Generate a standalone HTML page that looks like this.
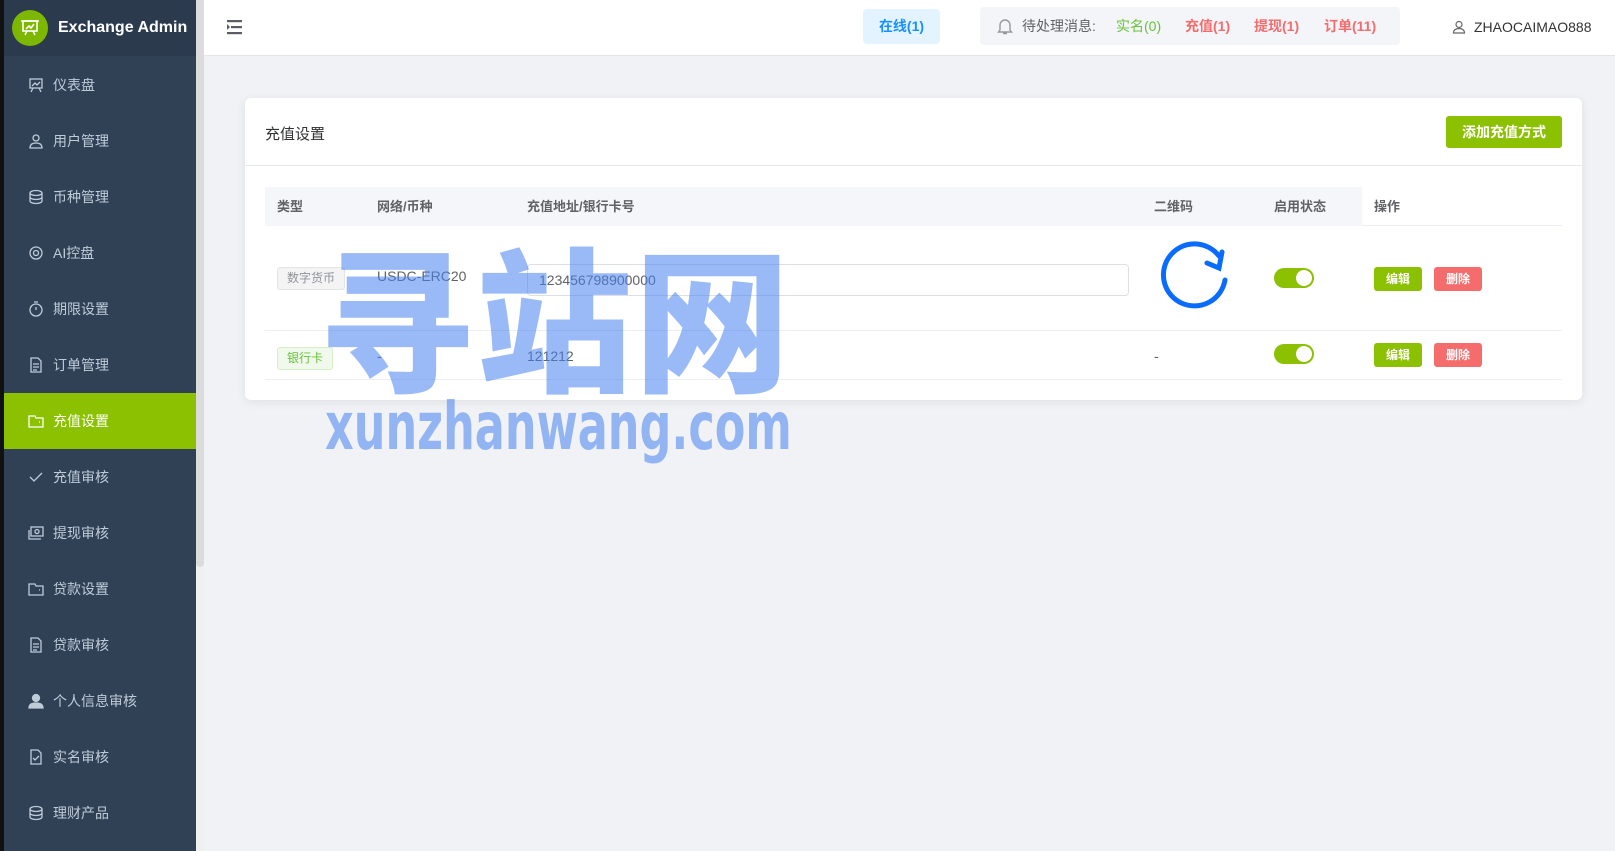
<!DOCTYPE html>
<html><head><meta charset="utf-8"><style>
*{box-sizing:border-box;margin:0;padding:0}
body{width:1615px;height:851px;overflow:hidden;background:#f0f2f5;font-family:"Liberation Sans","Noto Sans CJK SC",sans-serif;position:relative;font-size:14px;color:#303133}
.strip{position:absolute;left:0;top:0;width:4px;height:851px;background:#111}
.side{position:absolute;left:4px;top:0;width:192px;height:851px;background:#304156}
.logo{height:56px;background:#2b3a4d;display:flex;align-items:center;padding-left:8px}
.lc{width:36px;height:36px;border-radius:50%;background:#7db700;display:flex;align-items:center;justify-content:center}
.lt{color:#fff;font-weight:bold;font-size:16px;margin-left:10px}
.item{position:absolute;left:0;width:192px;height:56px;display:flex;align-items:center;padding-left:24px;color:#bfcbd9;font-size:14px}
.item svg{width:16px;height:16px;margin-right:9px;stroke:#bfcbd9;fill:none;stroke-width:1.3}
.item.act{background:#8bc100;color:#fff}
.item.act svg{stroke:#fff}
.scroll{position:absolute;left:196px;top:0;width:8px;height:567px;background:#dcdcdc;border-radius:0 0 4px 4px}
.scbg{position:absolute;left:196px;top:0;width:8px;height:851px;background:#f0f0f0}
.head{position:absolute;left:204px;top:0;right:0;height:56px;background:#fff;border-bottom:1px solid #e6e6e6}
.card{position:absolute;left:245px;top:98px;width:1337px;height:302px;background:#fff;border-radius:6px;box-shadow:0 2px 10px rgba(0,0,0,.08)}
.abs{position:absolute}
.th{position:absolute;top:9px;font-weight:bold;color:#606266;font-size:13px}
.btn{position:absolute;color:#fff;font-size:12px;font-weight:bold;border-radius:3px;text-align:center;width:48px;height:24px;line-height:24px}
.sw{position:absolute;width:40px;height:20px;border-radius:10px;background:#8bc100}
.sw::after{content:"";position:absolute;right:2px;top:2px;width:16px;height:16px;border-radius:50%;background:#fff}
</style></head><body>
<div class="strip"></div>
<div class="scbg"></div><div class="scroll"></div>
<div class="side">
<div class="logo"><div class="lc"><svg width="20" height="20" viewBox="0 0 20 20" fill="none" stroke="#fff" stroke-width="1.6"><rect x="3" y="3" width="14" height="10"/><path d="M6 11l3-3 2 2 3-4M7 13l-2 4M13 13l2 4M1 3h18"/></svg></div><div class="lt">Exchange Admin</div></div>
<div class="item" style="top:57px"><svg viewBox="0 0 16 16"><rect x="2" y="2" width="12" height="9"/><path d="M4 9l3-3 2 2 3-3M5 11l-2 4M11 11l2 4"/></svg>仪表盘</div>
<div class="item" style="top:113px"><svg viewBox="0 0 16 16"><circle cx="8" cy="5" r="3"/><path d="M2 15c0-4 3-5 6-5s6 1 6 5z"/></svg>用户管理</div>
<div class="item" style="top:169px"><svg viewBox="0 0 16 16"><ellipse cx="8" cy="4" rx="6" ry="2.5"/><path d="M2 4v8c0 1.4 2.7 2.5 6 2.5s6-1.1 6-2.5V4M2 8c0 1.4 2.7 2.5 6 2.5S14 9.4 14 8"/></svg>币种管理</div>
<div class="item" style="top:225px"><svg viewBox="0 0 16 16"><circle cx="8" cy="8" r="2.5"/><circle cx="8" cy="8" r="6"/></svg>AI控盘</div>
<div class="item" style="top:281px"><svg viewBox="0 0 16 16"><circle cx="8" cy="9" r="6"/><path d="M8 9V6M6 1h4"/></svg>期限设置</div>
<div class="item" style="top:337px"><svg viewBox="0 0 16 16"><path d="M3 1h7l3 3v11H3zM5 7h6M5 10h6M5 13h4"/></svg>订单管理</div>
<div class="item act" style="top:393px"><svg viewBox="0 0 16 16"><path d="M1 3h6l1 2h7v9H1zM11 9h1"/></svg>充值设置</div>
<div class="item" style="top:449px"><svg viewBox="0 0 16 16"><path d="M2 8l4 4 8-8"/></svg>充值审核</div>
<div class="item" style="top:505px"><svg viewBox="0 0 16 16"><rect x="3" y="2" width="12" height="9"/><path d="M1 5v9h12"/><circle cx="9" cy="6.5" r="2"/></svg>提现审核</div>
<div class="item" style="top:561px"><svg viewBox="0 0 16 16"><path d="M1 3h6l1 2h7v9H1zM11 9h1"/></svg>贷款设置</div>
<div class="item" style="top:617px"><svg viewBox="0 0 16 16"><path d="M3 1h7l3 3v11H3zM5 7h6M5 10h6M5 13h4"/></svg>贷款审核</div>
<div class="item" style="top:673px"><svg viewBox="0 0 16 16" style="fill:#bfcbd9"><circle cx="8" cy="5" r="3.5"/><path d="M1 15c0-4 3-5 7-5s7 1 7 5z"/></svg>个人信息审核</div>
<div class="item" style="top:729px"><svg viewBox="0 0 16 16"><path d="M3 1h7l3 3v11H3zM5 9l2 2 4-4"/></svg>实名审核</div>
<div class="item" style="top:785px"><svg viewBox="0 0 16 16"><ellipse cx="8" cy="4" rx="6" ry="2.5"/><path d="M2 4v8c0 1.4 2.7 2.5 6 2.5s6-1.1 6-2.5V4M2 8c0 1.4 2.7 2.5 6 2.5S14 9.4 14 8"/></svg>理财产品</div>
</div>
<div class="head">
<svg class="abs" style="left:22px;top:19px" width="17" height="16" viewBox="0 0 17 16" fill="#5a5e66"><rect x="1" y="1" width="15" height="2.2"/><rect x="5" y="7" width="11" height="2.2"/><rect x="1" y="13" width="15" height="2.2"/><path d="M1 5v6l3-3z"/></svg>
<div class="abs" style="left:659px;top:9px;width:77px;height:35px;background:#e3f3ff;border-radius:4px;color:#1890ff;font-weight:bold;text-align:center;line-height:35px;font-size:14px">在线(1)</div>
<div class="abs" style="left:776px;top:7px;width:420px;height:38px;background:#f4f5f9;border-radius:4px;line-height:38px;font-size:14px;white-space:nowrap">
<svg class="abs" style="left:17px;top:11px" width="16" height="17" viewBox="0 0 16 17" fill="none" stroke="#999" stroke-width="1.4"><path d="M3 12V7a5 5 0 0110 0v5l1.5 2h-13zM6 15.5h4"/></svg>
<span class="abs" style="left:42px;color:#606266">待处理消息:</span>
<span class="abs" style="left:136px;color:#67c23a">实名(0)</span>
<span class="abs" style="left:205px;color:#f56c6c;font-weight:bold">充值(1)</span>
<span class="abs" style="left:274px;color:#f56c6c;font-weight:bold">提现(1)</span>
<span class="abs" style="left:344px;color:#f56c6c;font-weight:bold">订单(11)</span>
</div>
<svg class="abs" style="left:1248px;top:20px" width="14" height="14" viewBox="0 0 14 14" fill="none" stroke="#666" stroke-width="1.2"><circle cx="7" cy="4.5" r="3"/><path d="M1.5 13c0-3 2.5-4.5 5.5-4.5s5.5 1.5 5.5 4.5z"/></svg>
<div class="abs" style="left:1270px;top:19px;font-size:14px;color:#333">ZHAOCAIMAO888</div>
</div>
<div class="card">
<div class="abs" style="left:20px;top:25px;font-size:15px;color:#303133">充值设置</div>
<div class="abs" style="left:1201px;top:18px;width:116px;height:32px;background:#8bc100;border-radius:3px;color:#fff;font-weight:bold;text-align:center;line-height:32px;font-size:14px">添加充值方式</div>
<div class="abs" style="left:0;top:67px;width:1337px;height:1px;background:#e6e8ee"></div>
<div class="abs" style="left:20px;top:89px;width:1297px;height:39px;border-bottom:1px solid #ebeef5">
<div class="abs" style="left:0;top:0;width:1097px;height:39px;background:#f5f6f9"></div>
<div class="th" style="left:12px">类型</div><div class="th" style="left:112px">网络/币种</div><div class="th" style="left:262px">充值地址/银行卡号</div><div class="th" style="left:889px">二维码</div><div class="th" style="left:1009px">启用状态</div><div class="th" style="left:1109px">操作</div>
</div>
<div class="abs" style="left:20px;top:232px;width:1297px;height:1px;background:#ebeef5"></div>
<div class="abs" style="left:20px;top:281px;width:1297px;height:1px;background:#ebeef5"></div>
<div class="abs" style="left:32px;top:169px;width:68px;height:23px;border:1px solid #e4e4e4;background:#f4f4f5;border-radius:3px;color:#909399;font-size:12px;text-align:center;line-height:21px">数字货币</div>
<div class="abs" style="left:132px;top:170px;color:#606266">USDC-ERC20</div>
<div class="abs" style="left:282px;top:166px;width:602px;height:32px;border:1px solid #dcdfe6;border-radius:4px;padding-left:11px;line-height:30px;color:#606266">123456798900000</div>
<svg class="abs" style="left:905px;top:140px" width="80" height="80" viewBox="0 0 80 80" fill="none" stroke="#0a6cff" stroke-width="5" stroke-linecap="round"><path d="M75 42A31 31 0 1 1 69 18"/><path d="M72 14l-3 16-12-5"/></svg>
<div class="sw" style="left:1029px;top:170px"></div>
<div class="btn" style="left:1129px;top:169px;background:#8bc100">编辑</div>
<div class="btn" style="left:1189px;top:169px;background:#f56c6c">删除</div>
<div class="abs" style="left:32px;top:249px;width:56px;height:23px;border:1px solid #d6f0c6;background:#f0f9eb;border-radius:3px;color:#67c23a;font-size:12px;text-align:center;line-height:21px">银行卡</div>
<div class="abs" style="left:132px;top:250px;color:#606266">-</div>
<div class="abs" style="left:282px;top:250px;color:#606266">121212</div>
<div class="abs" style="left:909px;top:250px;color:#606266">-</div>
<div class="sw" style="left:1029px;top:246px"></div>
<div class="btn" style="left:1129px;top:245px;background:#8bc100">编辑</div>
<div class="btn" style="left:1189px;top:245px;background:#f56c6c">删除</div>
</div>
<div class="abs" style="left:318px;top:222px;font-size:156px;font-weight:900;color:rgba(70,130,240,.55);letter-spacing:2px;line-height:180px;font-family:'Noto Sans CJK SC',sans-serif;white-space:nowrap">寻站网</div>
<div class="abs" style="left:325px;top:392px;font-size:66px;font-weight:bold;color:rgba(70,130,240,.55);line-height:70px;font-family:'DejaVu Sans',sans-serif;transform:scaleX(0.675);transform-origin:left;white-space:nowrap">xunzhanwang.com</div>
</body></html>
